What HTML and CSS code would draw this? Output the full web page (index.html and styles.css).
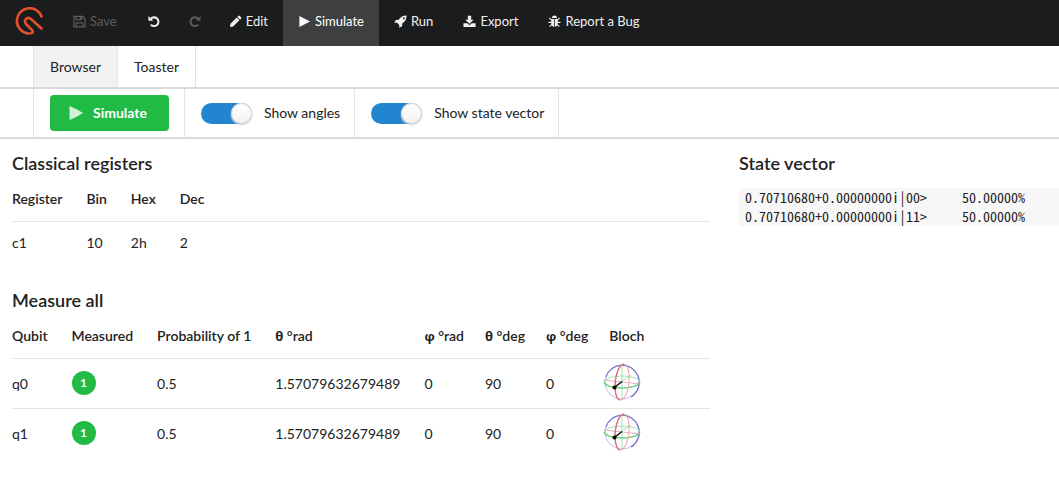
FILE: index.html
```html
<!DOCTYPE html>
<html lang="en">
<head>
<meta charset="utf-8">
<title>Simulator</title>
<link rel="stylesheet" href="styles.css">
</head>
<body>
<svg class="defs" aria-hidden="true">
  <symbol id="bloch" viewBox="0 0 40 40" fill="none">
    <circle cx="20" cy="20" r="17" stroke="#b9b9ee"/>
    <path d="M4 15A17 17 0 0 1 36 14" stroke="#7474cf" stroke-width="1.200"/>
    <path d="M36 14A17 17 0 0 1 29 35" stroke="#7070c8" stroke-width="1.200"/>
    <ellipse cx="20" cy="20" rx="18" ry="6" stroke="#a3e6ac"/>
    <path d="M2 20C5 28 35 28 38 20" stroke="#62cf73" stroke-width="1.200"/>
    <path d="M2 18L38 22" stroke="#dc8e9c" stroke-width="0.700"/>
    <path d="M20 3V37M12 25L29 13" stroke="#8acb92" stroke-width="0.700"/>
    <ellipse cx="20" cy="20" rx="7" ry="18" transform="rotate(6 20 20)" stroke="#f0a5b1"/>
    <path d="M22 2C12 4 10 36 18 38" stroke="#dd6079" stroke-width="1.200"/>
    <path d="M12.500 25.500L20 19.500" stroke="#000" stroke-width="1.200"/>
    <circle cx="12.500" cy="25.500" r="2" fill="#000"/>
  </symbol>
</svg>
<nav class="topbar">
  <a class="logo" href="#" aria-label="Home">
    <svg viewBox="0 0 30 30" width="30" height="30" fill="none" stroke="#e5502a" stroke-width="2.600" stroke-linecap="round" stroke-linejoin="round">
      <path d="M27.500 9.500A12.700 12.700 0 1 0 14 26.500Q21.500 26.500 17.500 22.500L12 17C9 12.500 13.800 9 17.500 12.500L27.500 21.500"/>
    </svg>
  </a>
  <a class="item disabled" href="#"><svg class="icon" viewBox="0 0 14 14" fill="none" stroke="currentColor" stroke-width="1.300"><path d="M1 1.500H10.500L13 4V12.800H1ZM3.500 1.500V5H9.500V1.500M3.500 12.800V8.500H10.500V12.800"/><path d="M8 2V4.500"/></svg>Save</a>
  <a class="item" href="#" aria-label="Undo"><svg class="icon solo" viewBox="0 0 14 14" fill="none" stroke="currentColor" stroke-width="2.200"><path d="M3.500 4.200A4.700 4.700 0 1 1 3.500 10.300"/><path d="M1 1V6.200H6.200Z" fill="currentColor" stroke="none"/></svg></a>
  <a class="item disabled" href="#" aria-label="Redo"><svg class="icon solo" viewBox="0 0 14 14" fill="none" stroke="currentColor" stroke-width="2.200"><path d="M10.500 4.200A4.700 4.700 0 1 0 10.500 10.300"/><path d="M13 1V6.200H7.800Z" fill="currentColor" stroke="none"/></svg></a>
  <a class="item" href="#"><svg class="icon" viewBox="0 0 14 14" fill="currentColor"><path d="M1 13L1.600 9.500L8.300 2.800L11.200 5.700L4.500 12.400ZM9 2.100L10.200 0.900Q10.800 0.500 11.400 0.900L13.100 2.600Q13.500 3.200 13.100 3.800L11.900 5Z"/></svg>Edit</a>
  <a class="item active" href="#"><svg class="icon" viewBox="0 0 14 14" fill="currentColor"><path d="M1.500 1.200L13 7L1.500 12.800Z"/></svg>Simulate</a>
  <a class="item" href="#"><svg class="icon" viewBox="0 0 14 14" fill="currentColor"><path d="M13.500 0.500C9.500 0.500 7 2.200 5 5L2 5.300L0.300 8.400L3.300 8.300L5.700 10.700L5.600 13.700L8.700 12L9 9C12 7 13.500 4.500 13.500 0.500ZM10.600 2.500A1 1 0 1 1 10.600 4.500A1 1 0 1 1 10.600 2.500Z" fill-rule="evenodd"/></svg>Run</a>
  <a class="item" href="#"><svg class="icon" viewBox="0 0 14 14" fill="currentColor"><path d="M5.200 0.800H8.800V5H11.500L7 9.500L2.500 5H5.200Z"/><path d="M0.500 9H4.700L7 11L9.300 9H13.500V13H0.500Z"/></svg>Export</a>
  <a class="item" href="#"><svg class="icon" viewBox="0 0 14 14" fill="currentColor" stroke="currentColor"><path d="M4.300 3.300A2.700 2.700 0 0 1 9.700 3.300ZM3.500 4.200H6.600V12.800Q3.500 12 3.500 9.500ZM7.400 4.200H10.500V9.500Q10.500 12 7.400 12.800Z" stroke="none"/><path d="M4 5.500L1.500 3.200M10 5.500L12.500 3.200M4 8H0.500M10 8H13.500M4.200 10L1.800 12.500M9.800 10L12.200 12.500" fill="none" stroke-width="1.200"/></svg>Report a Bug</a>
</nav>
<nav class="subbar tabs">
  <a class="tab active" href="#">Browser</a>
  <a class="tab" href="#">Toaster</a>
</nav>
<div class="subbar tools">
  <div class="tool"><button class="run" type="button"><svg viewBox="0 0 14 14" width="14" height="14" fill="currentColor"><path d="M0.500 0Q7 2.500 14 7Q7 11.500 0.500 14Z"/></svg>Simulate</button></div>
  <div class="tool"><label class="switch"><input type="checkbox" checked>Show angles</label></div>
  <div class="tool"><label class="switch"><input type="checkbox" checked>Show state vector</label></div>
</div>
<main class="content">
  <div class="tables">
    <section>
      <h2>Classical registers</h2>
      <table class="registers">
        <thead><tr><th>Register</th><th>Bin</th><th>Hex</th><th>Dec</th><th class="rest"></th></tr></thead>
        <tbody><tr><td>c1</td><td>10</td><td>2h</td><td>2</td><td></td></tr></tbody>
      </table>
    </section>
    <section>
      <h2>Measure all</h2>
      <table class="qubits">
        <thead><tr><th>Qubit</th><th>Measured</th><th>Probability of 1</th><th><span class="greek">θ</span> °rad</th><th class="angle"><span class="greek">φ</span> °rad</th><th class="angle"><span class="greek">θ</span> °deg</th><th class="last-angle"><span class="greek">φ</span> °deg</th><th class="sphere">Bloch</th><th class="rest"></th></tr></thead>
        <tbody>
          <tr><td>q0</td><td><span class="badge">1</span></td><td>0.5</td><td>1.57079632679489</td><td>0</td><td>90</td><td>0</td><td class="sphere-cell"><svg class="bloch"><use href="#bloch"/></svg></td><td></td></tr>
          <tr><td>q1</td><td><span class="badge">1</span></td><td>0.5</td><td>1.57079632679489</td><td>0</td><td>90</td><td>0</td><td class="sphere-cell"><svg class="bloch"><use href="#bloch"/></svg></td><td></td></tr>
        </tbody>
      </table>
    </section>
  </div>
  <section>
    <h2>State vector</h2>
    <pre class="vector">0.70710680+0.00000000i|00>     50.00000%
0.70710680+0.00000000i|11>     50.00000%</pre>
  </section>
</main>
</body>
</html>
```
FILE: styles.css
```css
* { box-sizing: border-box; }
body {
  margin: 0;
  background: #fff;
  color: #222;
  font: 14px/18px Lato, "Noto Sans", sans-serif;
}
a { color: inherit; text-decoration: none; }
.defs { display: none; }

.topbar {
  display: flex;
  height: 46px;
  background: #1b1c1d;
  color: #f0f0f0;
  font-size: 13px;
}
.logo { display: flex; align-items: center; padding: 0 14px; }
.logo svg { margin-bottom: 2px; }
.item { display: flex; align-items: center; padding: 0 15px 4px; }
.item.disabled { color: #5b5c5d; }
.item.active { background: #3e3f40; color: #fff; }
.icon { width: 13px; height: 13px; margin-right: 4px; }
.icon.solo { width: 14px; margin-right: 0; }
.item:has(.solo) { padding: 0 12px 4px 15px; }

.subbar { display: flex; padding-left: 33px; border-bottom: 2px solid #d9dadb; }
.tab {
  display: flex;
  align-items: center;
  height: 41px;
  padding: 0 16px;
  border-right: 1px solid #e4e4e5;
}
.tab.active { border-left: 1px solid #e4e4e5; background: #f2f2f2; }
.tool {
  display: flex;
  align-items: center;
  height: 48px;
  padding: 0 14px 0 16px;
  border-right: 1px solid #e4e4e5;
}
.tool:first-child { padding-right: 15px; border-left: 1px solid #e4e4e5; }
.run {
  display: flex;
  align-items: center;
  gap: 10px;
  height: 36px;
  padding: 0 22px 0 19px;
  border: 0;
  border-radius: 4px;
  background: #21ba45;
  color: #fff;
  font: 700 14px/18px Lato, sans-serif;
}
.run svg { opacity: 0.8; }
.switch { display: flex; align-items: center; gap: 12px; }
.switch input {
  display: flex;
  justify-content: flex-end;
  appearance: none;
  width: 51px;
  height: 21px;
  margin: 0;
  border-radius: 11px;
  background: #2185d0;
}
.switch input::before {
  content: "";
  width: 21px;
  height: 21px;
  border-radius: 50%;
  background: linear-gradient(#fff, #f3f3f3);
  box-shadow: 0 0 0 1px #d4d4d5 inset, 0 1px 2px #ccc;
}
.switch input:not(:checked) { justify-content: flex-start; background: #ddd; }

.content {
  display: grid;
  grid-template-columns: minmax(0, 698fr) minmax(0, 320fr);
  gap: 29px;
  padding: 12px 0 12px 12px;
}
.tables { display: grid; gap: 24px; }
h2 { margin: 0; font-size: 18px; line-height: 24px; font-weight: 600; }
table { width: 100%; border-collapse: collapse; }
th, td { padding: 0 24px 0 0; text-align: left; white-space: nowrap; }
th { height: 46px; padding-top: 2px; font-weight: 600; }
td { height: 43px; border-top: 1px solid #e4e4e5; }
.rest { width: 100%; padding: 0; }
.qubits td { height: 50px; padding-top: 1px; }
.qubits .badge { margin-bottom: 2px; }
.qubits .angle { padding-right: 21px; }
.qubits .last-angle { padding-right: 14px; }
.qubits .sphere { padding: 2px 0 0 7px; }
.qubits .sphere-cell { padding: 0 0 2px; }
.greek { font-family: "Open Sans", sans-serif; font-size: 13px; font-weight: 700; }
.badge {
  display: flex;
  align-items: center;
  justify-content: center;
  width: 24px;
  height: 24px;
  border-radius: 50%;
  background: #21ba45;
  color: #fff;
  font-size: 12px;
  font-weight: 700;
}
.bloch { display: block; width: 40px; height: 40px; }
.vector {
  margin: 13px 0 0;
  padding: 0 6px;
  overflow: hidden;
  background: #f7f7f7;
  font: 14px/19px "Noto Sans CJK JP", monospace;
  font-feature-settings: "hwid";
}
```
